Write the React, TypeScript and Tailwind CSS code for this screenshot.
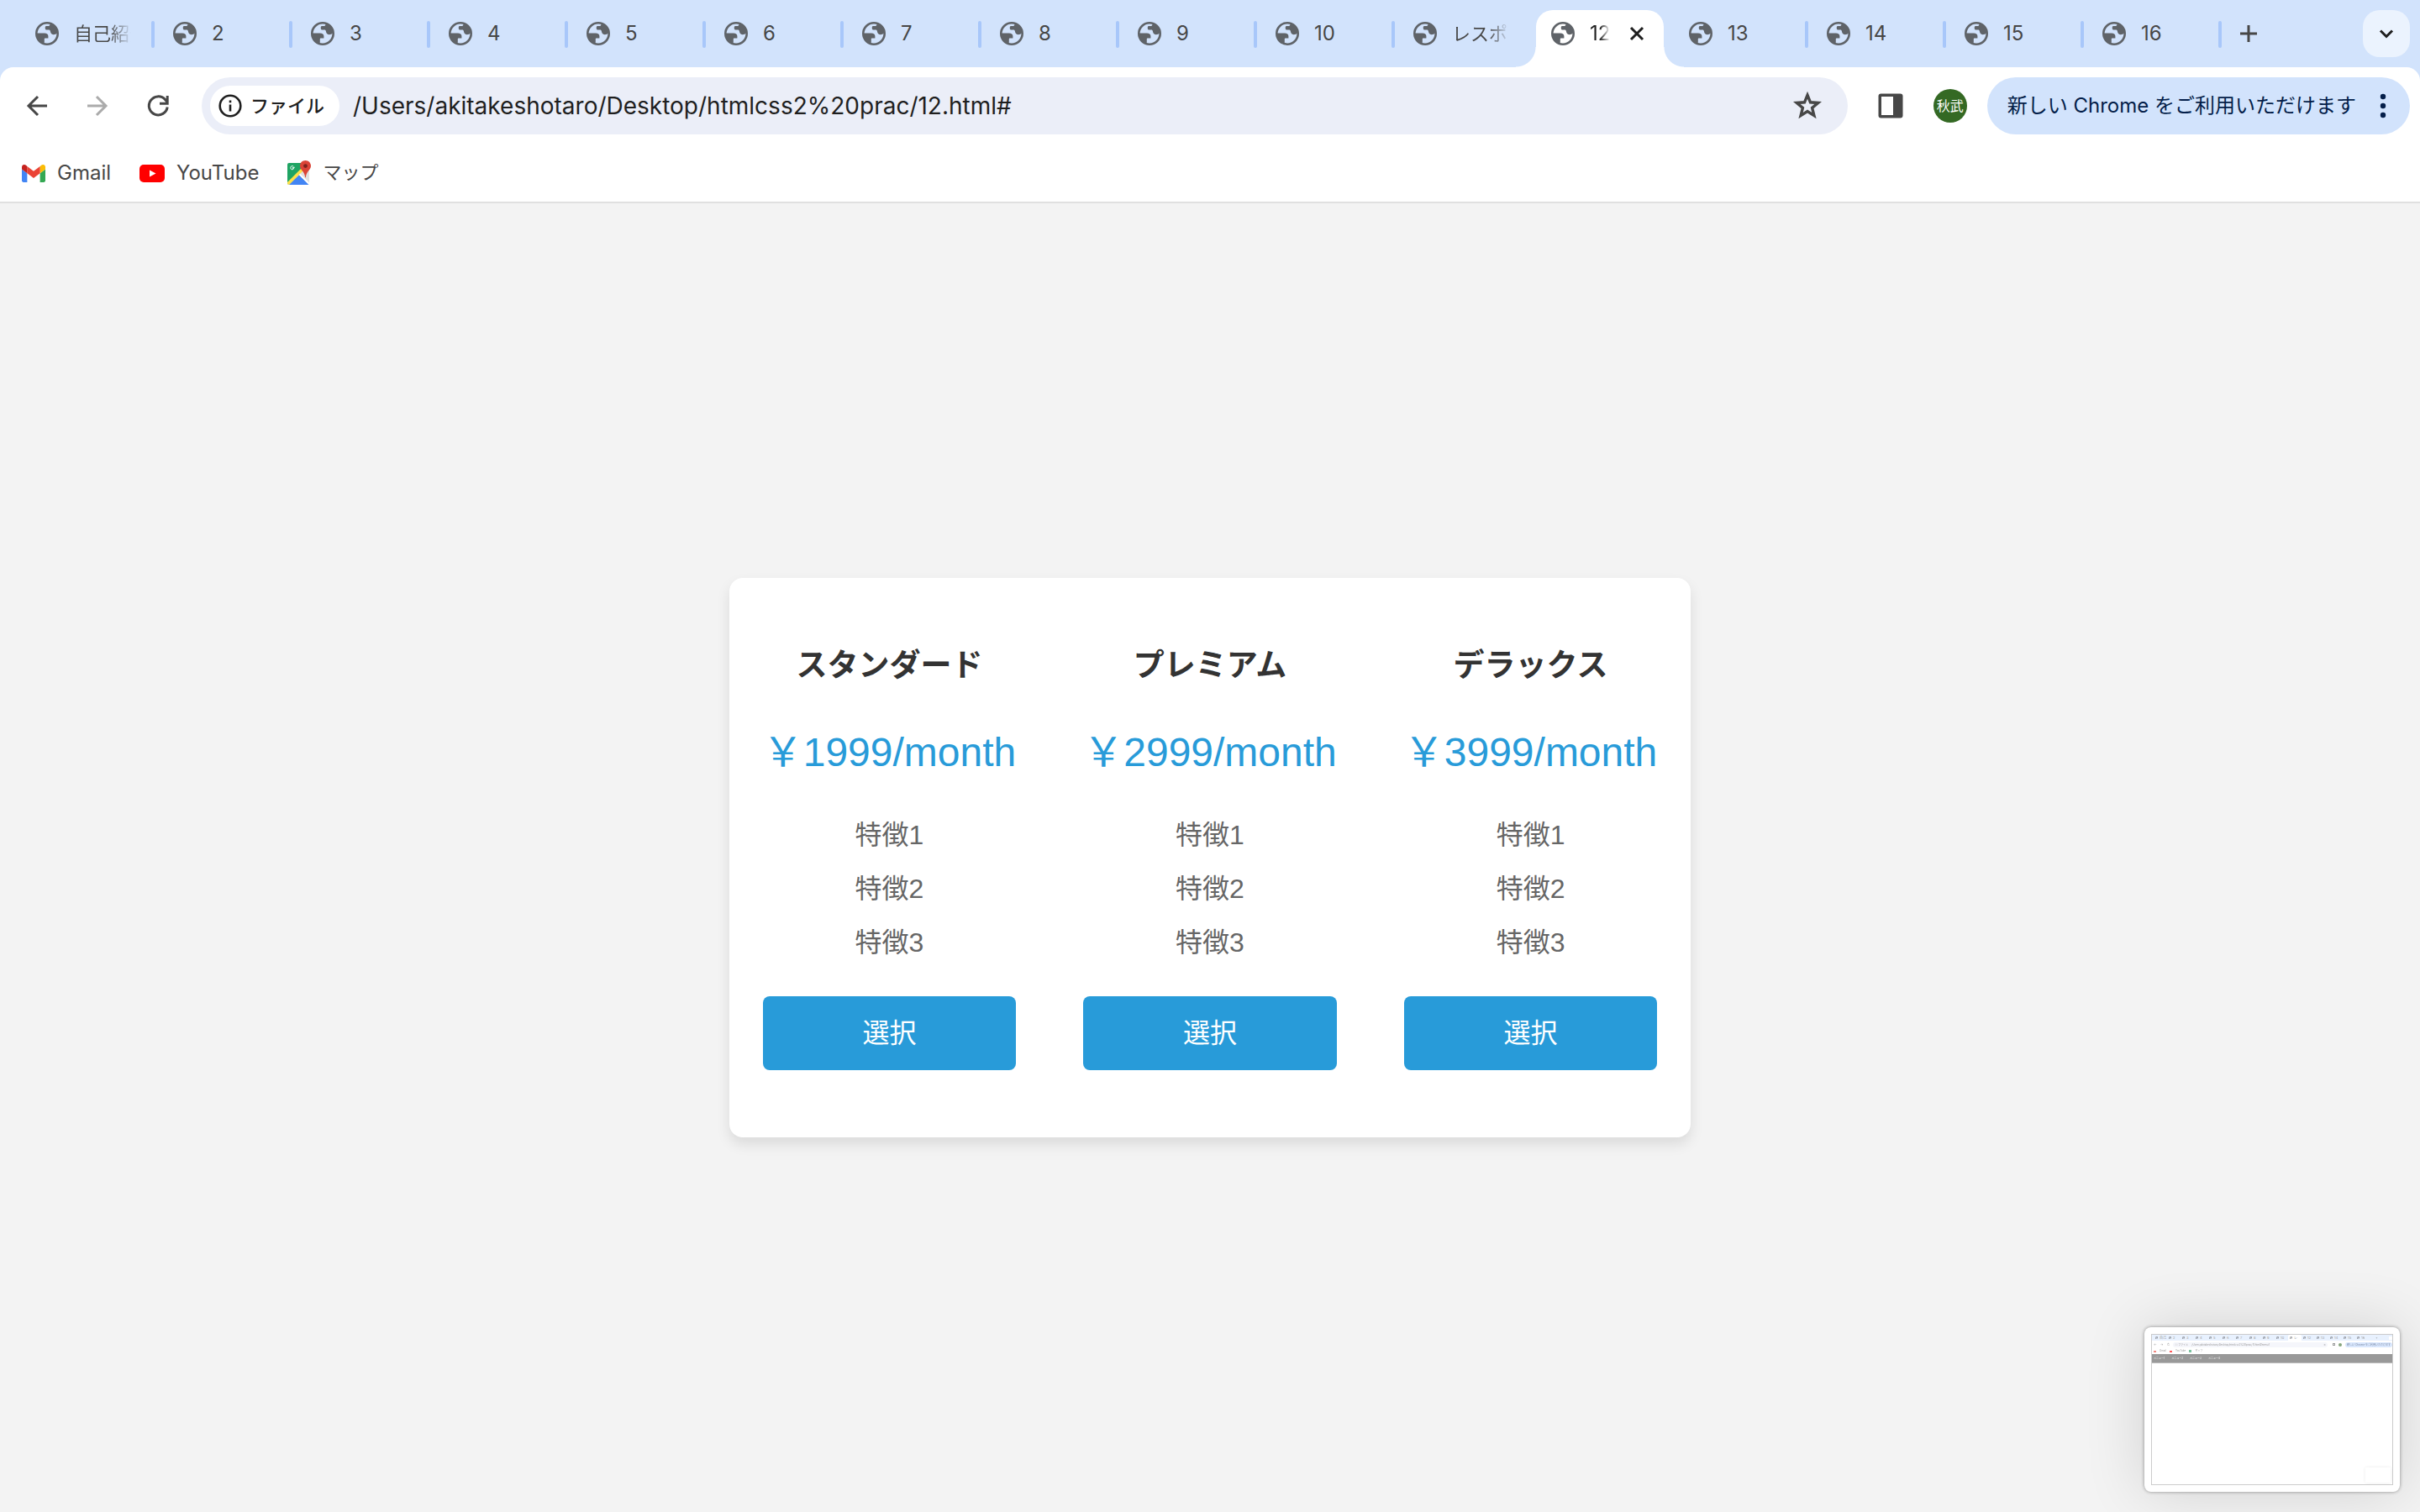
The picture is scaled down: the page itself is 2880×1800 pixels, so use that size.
import React from "react";

const UI = "font-['Inter','Noto_Sans_CJK_JP',sans-serif]";

function Globe({ className = "size-7" }: { className?: string }) {
  return (
    <svg viewBox="0 0 28 28" className={`${className} shrink-0`} fill="none" aria-hidden="true">
      <circle cx="14" cy="14" r="12.7" stroke="#5f6368" strokeWidth="2.6" />
      <path
        fill="#5f6368"
        d="M1.5 13.6h9.300c3 0 4.600 1.300 4.600 3.500v2.300h-3.400c-.8 0-1.200.5-1.200 1.200v2.900c0 1-.3 2-.6 2.800C5 25 1.400 20 1.500 13.600Z"
      />
      <path
        fill="#5f6368"
        d="M17.600 2.200c-.2 2-1 2.800-2.400 2.800h-1.700c-1.300 0-1.700.6-1.700 1.600v1.200c0 1.200.6 1.800 1.900 1.800h2.500c1 0 1.500.6 1.700 1.700.3 2.200 1.400 3.900 3.700 3.900 2 0 3.400-.7 4.700-2.200C25.500 7.500 22 3.500 17.600 2.200Z"
      />
    </svg>
  );
}

function GmailLogo() {
  return (
    <svg viewBox="52 42 88 66" className="h-[21px] w-7 shrink-0" aria-hidden="true">
      <path fill="#4285f4" d="M58 108h14V74L52 59v43c0 3.320 2.690 6 6 6" />
      <path fill="#34a853" d="M120 108h14c3.320 0 6-2.690 6-6V59l-20 15" />
      <path fill="#fbbc04" d="M120 48v26l20-15v-8c0-7.420-8.470-11.650-14.400-7.200" />
      <path fill="#ea4335" d="M72 74V48l24 18 24-18v26L96 92" />
      <path fill="#c5221f" d="M52 51v8l20 15V48l-5.600-4.200c-5.940-4.450-14.400-.22-14.400 7.200" />
    </svg>
  );
}

function YouTubeLogo() {
  return (
    <svg viewBox="0 0 30 21" className="h-[21px] w-[30px] shrink-0" aria-hidden="true">
      <rect width="30" height="21" rx="5" fill="#f00" />
      <path d="M12 6.500 19.500 10.500 12 14.500Z" fill="#fff" />
    </svg>
  );
}

function MapsLogo() {
  return (
    <svg viewBox="0 0 28 29" className="h-[29px] w-7 shrink-0" aria-hidden="true">
      <defs>
        <clipPath id="map-sheet">
          <rect x="0" y="3" width="26" height="26" rx="2" />
        </clipPath>
      </defs>
      <g clipPath="url(#map-sheet)">
        <path fill="#1fa463" d="M0 3h26L0 29Z" />
        <path fill="#e0e0e0" d="M26 3v26L13 16Z" />
        <path fill="#4285f4" d="M1 29 14 17l12 12Z" />
        <path stroke="#ffe047" strokeWidth="3.600" d="M-1 29.500 20 8.500" />
        <path stroke="#fff" strokeWidth="2" d="m14.500 16.500 13 13" />
      </g>
      <path
        d="M8.700 8.300H6.500v1.200h1C7.200 10.400 6.500 10.800 5.800 10.800c-1.200 0-2-.9-2-2.100s.9-2.100 2-2.100c.6 0 1 .2 1.400.5"
        fill="none"
        stroke="#fff"
        strokeWidth="1"
      />
      <path
        fill="#db4437"
        d="M21.500 0C17.900 0 15 2.800 15 6.400c0 4.900 5.400 6 6.200 13.600.1.600.6.600.7 0C22.600 12.400 28 11.300 28 6.400 28 2.800 25.100 0 21.500 0Z"
      />
      <circle cx="21.500" cy="6.600" r="2.400" fill="#7b231e" />
    </svg>
  );
}

const tabs = ["自己紹介", "2", "3", "4", "5", "6", "7", "8", "9", "10", "レスポンシブ", "12", "13", "14", "15", "16"];
const ACTIVE = 11;

function Tab({ title, active, divider }: { title: string; active: boolean; divider: boolean }) {
  if (active) {
    return (
      <div className="w-[164px] shrink-0 pt-3 pr-2 pl-1">
        <div className="relative flex h-[68px] items-start rounded-t-[20px] bg-white pt-3.5 pl-[18px]">
          <span className="absolute bottom-0 -left-6 size-6 bg-[radial-gradient(circle_at_0_0,transparent_23px,white_24px)]" />
          <span className="absolute -right-6 bottom-0 size-6 bg-[radial-gradient(circle_at_100%_0,transparent_23px,white_24px)]" />
          <Globe />
          <button className="ml-[18px] w-6 overflow-hidden bg-linear-to-r from-[#1f1f1f] from-50% to-transparent bg-clip-text text-left text-2xl/7 whitespace-nowrap text-transparent">
            {title}
          </button>
          <button aria-label="閉じる" className="ml-5 flex h-7 items-center">
            <svg viewBox="0 0 24 24" className="size-6" stroke="#1f1f1f" strokeWidth="3">
              <path d="m5 5 14 14M19 5 5 19" />
            </svg>
          </button>
        </div>
      </div>
    );
  }
  return (
    <div className="flex h-20 w-[164px] shrink-0 items-center pl-[22px]">
      <Globe />
      <button
        className={
          title.length > 2
            ? "ml-[18px] w-[72px] overflow-hidden bg-linear-to-r from-[#474747] from-60% to-transparent to-95% bg-clip-text text-left text-[22px]/7 whitespace-nowrap text-transparent"
            : "ml-[18px] w-[72px] text-left text-2xl/7 text-[#474747]"
        }
      >
        {title}
      </button>
      {divider && <span className="mt-0.5 ml-auto h-8 w-1 rounded-xs bg-[#a8c7fa]" />}
    </div>
  );
}

function TabStrip() {
  return (
    <div className="flex h-20 items-center bg-[#d2e3fc] pr-3 pl-5">
      {tabs.map((t, i) => (
        <Tab key={t} title={t} active={i === ACTIVE} divider={i !== ACTIVE - 1} />
      ))}
      <button aria-label="新しいタブ" className="ml-[22px]">
        <svg viewBox="0 0 20 20" className="size-5" stroke="#474747" strokeWidth="3">
          <path d="M0 10h20M10 0v20" />
        </svg>
      </button>
      <button aria-label="タブを検索" className="ml-auto flex size-14 items-center justify-center rounded-[20px] bg-[#ebf3fe]">
        <svg viewBox="0 0 20 20" className="size-5" fill="none" stroke="#1f1f1f" strokeWidth="3">
          <path d="m3 6.500 7 7 7-7" />
        </svg>
      </button>
    </div>
  );
}

function Toolbar() {
  return (
    <div className="bg-[#d2e3fc]">
      <div className="flex h-20 items-center rounded-t-2xl bg-white pt-3 pr-3 pl-7">
        <button aria-label="戻る">
          <svg viewBox="0 0 32 32" className="size-8" fill="none" stroke="#474747" strokeWidth="3">
            <path d="M28 16H6M17 5 6 16l11 11" />
          </svg>
        </button>
        <button aria-label="進む" className="ml-10">
          <svg viewBox="0 0 32 32" className="size-8" fill="none" stroke="#ababab" strokeWidth="3">
            <path d="M4 16h22M15 5l11 11-11 11" />
          </svg>
        </button>
        <button aria-label="再読み込み" className="ml-10">
          <svg viewBox="0 0 32 32" className="size-8" fill="none" stroke="#474747" strokeWidth="3">
            <path d="M27.200 17.500A11 11 0 1 1 24.500 8.500L27.500 12M27.200 4v9.200H18" />
          </svg>
        </button>
        <div className="ml-9 flex h-[68px] flex-1 items-center rounded-full bg-[#ebeef8] pr-7 pl-2.5">
          <button className="flex h-12 items-center gap-2.5 rounded-full bg-white pr-[18px] pl-2.5 text-[22px] font-medium text-[#1f1f1f]">
            <svg viewBox="0 0 28 28" className="size-7" fill="none" stroke="#1f1f1f" strokeWidth="2.600">
              <circle cx="14" cy="14" r="12.300" />
              <path d="M14 12.500v8M14 7.500v2.700" />
            </svg>
            ファイル
          </button>
          <input
            aria-label="アドレス"
            defaultValue="/Users/akitakeshotaro/Desktop/htmlcss2%20prac/12.html#"
            className="ml-4 min-w-0 flex-1 bg-transparent text-[28px] text-[#1f1f1f] outline-none"
          />
          <button aria-label="ブックマークに追加">
            <svg viewBox="0 0 40 40" className="size-10" fill="none" stroke="#474747" strokeWidth="3.400">
              <path d="m20 7.200 3.500 8.600 9.200.7-7.100 5.900 2.300 9.200-7.900-5-7.900 5 2.300-9.200-7.100-5.900 9.200-.7Z" />
            </svg>
          </button>
        </div>
        <button aria-label="サイドパネル" className="ml-9">
          <svg viewBox="0 0 30 30" className="size-[30px]">
            <rect x="0.500" y="0.500" width="29" height="29" rx="3" fill="#474747" />
            <path d="M4 4h14v22H4Z" fill="#fff" />
          </svg>
        </button>
        <button className="ml-9 flex size-10 items-center justify-center rounded-full bg-[#346924] text-base text-white">
          <span className="whitespace-nowrap">秋武</span>
        </button>
        <button className="ml-6 flex h-[68px] items-center rounded-full bg-[#d2e3fc] pr-6 pl-6 text-2xl whitespace-nowrap text-[#041e49]">
          <span>新しい Chrome をご利用いただけます</span>
          <svg viewBox="0 0 16 32" className="ml-6 h-8 w-4" fill="#041e49">
            <circle cx="8" cy="5" r="3.200" />
            <circle cx="8" cy="16" r="3.200" />
            <circle cx="8" cy="27" r="3.200" />
          </svg>
        </button>
      </div>
    </div>
  );
}

function Bookmarks() {
  return (
    <nav className="flex h-[82px] items-center border-b-2 border-[#e0e0e0] bg-white pt-3 pl-[26px] text-2xl text-[#474747]">
      <a href="#" className="flex items-center gap-3.5">
        <GmailLogo />
        Gmail
      </a>
      <a href="#" className="ml-[34px] flex items-center gap-3.5">
        <YouTubeLogo />
        YouTube
      </a>
      <a href="#" className="ml-[34px] flex items-center gap-3.5">
        <MapsLogo />
        <span className="text-[22px]">マップ</span>
      </a>
    </nav>
  );
}

const plans = [
  { name: "スタンダード", price: "￥1999/month" },
  { name: "プレミアム", price: "￥2999/month" },
  { name: "デラックス", price: "￥3999/month" },
];

function Pricing() {
  return (
    <div className="grid grid-cols-3 rounded-2xl bg-white shadow-[0_8px_16px_rgba(0,0,0,0.1)]">
      {plans.map((p) => (
        <section key={p.name} className="flex flex-col items-center px-10 py-20 text-[32px]/[64px]">
          <h2 className="text-[37px]/[50px] font-bold text-[#333]">{p.name}</h2>
          <p className="mt-10 text-5xl/[76px] text-[#289bd9]">{p.price}</p>
          <ul className="mt-7 text-center text-[#666]">
            <li>特徴1</li>
            <li>特徴2</li>
            <li>特徴3</li>
          </ul>
          <a href="#" className="mt-8 block w-full rounded-lg bg-[#289bd9] py-3 text-center text-white">
            選択
          </a>
        </section>
      ))}
    </div>
  );
}

const miniTabs = ["自己", "2", "3", "4", "5", "6", "7", "8", "9", "10", "レ", "12", "13", "14", "15", "16"];

function Preview() {
  return (
    <div
      className={`${UI} fixed right-6 bottom-6 h-[196px] w-[304px] rounded-lg bg-white p-2 shadow-[0_0_4px_rgba(0,0,0,0.4),0_0_72px_rgba(0,0,0,0.14)]`}
    >
      <div className="flex h-full flex-col border border-[#ccc] text-[4px]/[7px] text-[#999]">
        <div className="flex h-[7px] items-center bg-[#e8f1fe] pl-0.5">
          {miniTabs.map((t, i) => (
            <span
              key={t}
              className={
                i === 10
                  ? "flex h-full w-4 items-center gap-0.5 rounded-t-xs bg-white pl-0.5 whitespace-nowrap"
                  : "flex w-4 items-center gap-0.5 pl-0.5 whitespace-nowrap"
              }
            >
              <Globe className="size-[3px]" />
              {t}
            </span>
          ))}
          <span className="flex-1 pl-2">+</span>
          <span className="size-1 bg-white" />
        </div>
        <div className="flex h-[9px] items-center gap-1 pl-0.5">
          <span>←</span>
          <span>→</span>
          <span>↻</span>
          <div className="flex h-1.5 flex-1 items-center gap-1 rounded-full bg-[#f5f6fb] pl-0.5 text-[3px]/[6px]">
            <span>ⓘ ファイル</span>
            <span>/Users/akitakeshotaro/Desktop/htmlcss2%20prac/11.html#menu1</span>
            <span className="ml-auto pr-0.5">☆</span>
          </div>
          <span className="ml-0.5 size-[3px] border border-[#999]" />
          <span className="size-1 rounded-full bg-[#85a57c]" />
          <span className="h-1.5 rounded-full bg-[#d9e7fd] px-0.5 text-[3px]/[6px] text-[#7b8aa5]">新しい Chrome をご利用いただけます</span>
        </div>
        <div className="flex h-[7px] items-center gap-1 pl-0.5 text-[3px]/[7px]">
          <span className="h-0.5 w-[3px] bg-[#f08a82]" />
          <span>Gmail</span>
          <span className="h-0.5 w-[3px] bg-[#ff5c5c]" />
          <span>YouTube</span>
          <span className="size-[3px] bg-[#7cc3a0]" />
          <span>マップ</span>
        </div>
        <div className="flex h-[11px] items-center gap-2 border-b border-[#bbb] bg-[#999] pl-0.5 text-[3px]/[10px] text-white">
          <span>メニュー1</span>
          <span>メニュー2</span>
          <span>メニュー3</span>
          <span>メニュー4</span>
        </div>
        <div className="flex flex-1 items-end justify-end bg-white p-0.5">
          <div className="h-[18px] w-[30px] bg-white shadow-[0_0_4px_rgba(0,0,0,0.08)]" />
        </div>
      </div>
    </div>
  );
}

export default function App() {
  return (
    <div className="flex min-h-screen flex-col bg-[#f3f3f3]">
      <header className={UI}>
        <TabStrip />
        <Toolbar />
        <Bookmarks />
      </header>
      <main className="flex flex-1 items-center justify-center font-['Liberation_Sans','Noto_Sans_CJK_JP',sans-serif]">
        <Pricing />
      </main>
      <Preview />
    </div>
  );
}
